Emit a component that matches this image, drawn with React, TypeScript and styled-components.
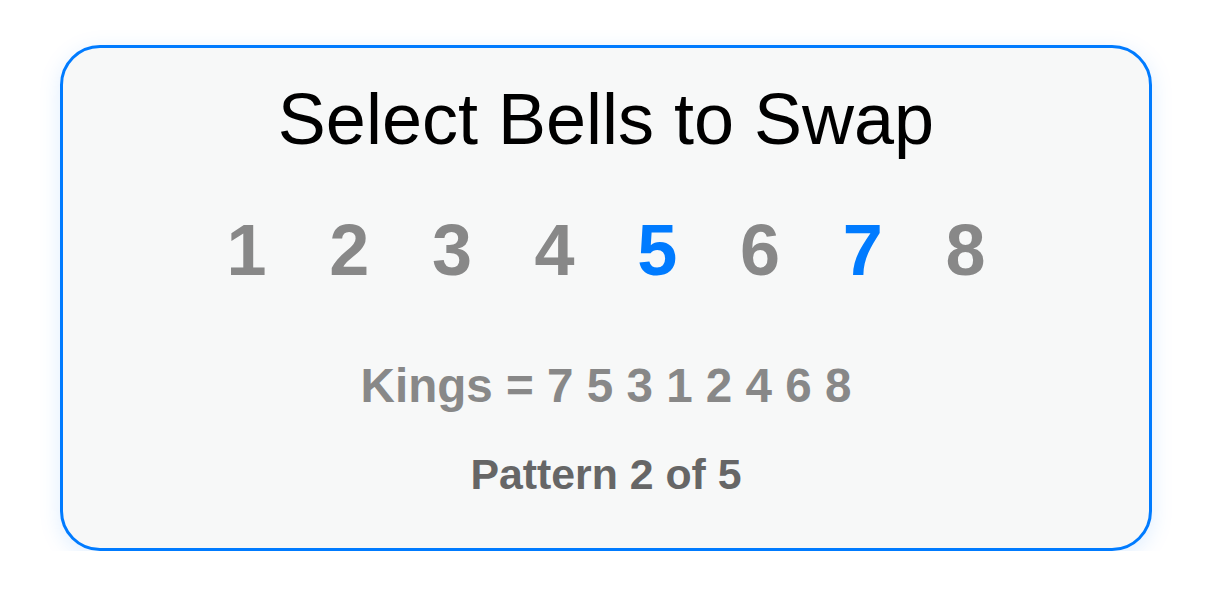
import React from "react";
import styled, { createGlobalStyle } from "styled-components";

const Global = createGlobalStyle`
  html, body { margin: 0; padding: 0; background: #ffffff; }
  body { font-family: "Liberation Sans", Arial, sans-serif; }
`;

const Page = styled.div`
  padding: 45px 0 0 60px;
`;

const Card = styled.div`
  box-sizing: border-box;
  width: 1092px;
  height: 506px;
  border: 3px solid #007bff;
  border-radius: 40px;
  background: #f7f8f8;
  box-shadow: 0 5px 22px rgba(0, 123, 255, 0.13);
  padding-top: 35px;
  display: flex;
  flex-direction: column;
  align-items: center;
`;

const Title = styled.h1`
  margin: 0;
  font-size: 72px;
  line-height: 72px;
  font-weight: 400;
  color: #000;
`;

const BellRow = styled.div`
  display: flex;
  gap: 62.7px;
  margin-top: 59.4px;
`;

const Bell = styled.span<{ $selected?: boolean }>`
  font-size: 72px;
  line-height: 72px;
  font-weight: 700;
  color: ${(p) => (p.$selected ? "#007bff" : "#888888")};
  cursor: pointer;
`;

const Kings = styled.div`
  margin-top: 76.1px;
  font-size: 47.6px;
  line-height: 48px;
  font-weight: 700;
  color: #888888;
`;

const PatternLabel = styled.div`
  margin-top: 42.4px;
  font-size: 42.8px;
  line-height: 43px;
  font-weight: 700;
  color: #666666;
`;

const bells = [1, 2, 3, 4, 5, 6, 7, 8];
const selected = [5, 7];

export default function App() {
  return (
    <>
      <Global />
      <Page>
        <Card>
          <Title>Select Bells to Swap</Title>
          <BellRow>
            {bells.map((b) => (
              <Bell key={b} $selected={selected.includes(b)}>
                {b}
              </Bell>
            ))}
          </BellRow>
          <Kings>Kings = 7 5 3 1 2 4 6 8</Kings>
          <PatternLabel>Pattern 2 of 5</PatternLabel>
        </Card>
      </Page>
    </>
  );
}
